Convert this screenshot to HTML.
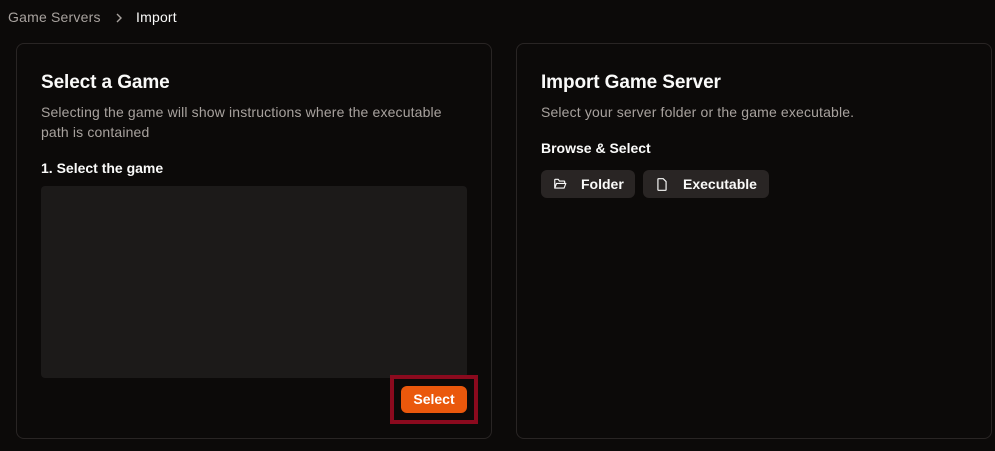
<!DOCTYPE html>
<html><head><style>
*{box-sizing:border-box;margin:0;padding:0}
body{width:995px;height:451px;background:#0c0a09;font-family:"Liberation Sans",sans-serif;color:#fafaf9;position:relative;overflow:hidden}
.abs{position:absolute}
.card{position:absolute;top:43px;width:476px;height:396px;border:1px solid #292524;border-radius:8px}
h2{position:absolute;font-size:19px;font-weight:bold;color:#fafaf9;letter-spacing:-0.1px}
.d{position:absolute;font-size:14px;color:#a8a29e;line-height:20px;letter-spacing:0.15px}
.l{position:absolute;font-size:14px;font-weight:bold}
.btn{position:absolute;top:170px;height:28px;background:#292524;border-radius:6px;font-size:14px;font-weight:bold;display:flex;align-items:center}
</style></head><body>
<div class="abs" style="left:8px;top:9px;font-size:14px;color:#a8a29e;letter-spacing:0.2px">Game Servers</div>
<svg class="abs" style="left:114px;top:12px" width="10" height="12" viewBox="0 0 10 12" fill="none" stroke="#a8a29e" stroke-width="1.4"><path d="M3 2l4 4-4 4"/></svg>
<div class="abs" style="left:136px;top:9px;font-size:14px;color:#fafaf9;letter-spacing:0.2px">Import</div>

<div class="card" style="left:16px"></div>
<h2 style="left:41px;top:72px">Select a Game</h2>
<div class="d" style="left:41px;top:102px;width:425px">Selecting the game will show instructions where the executable path is contained</div>
<div class="l" style="left:41px;top:160px">1. Select the game</div>
<div class="abs" style="left:41px;top:186px;width:426px;height:192px;background:#1c1a19;border-radius:4px"></div>
<div class="abs" style="left:390px;top:375px;width:88px;height:49px;border:4px solid #8b0a1e"></div>
<div class="abs" style="left:401px;top:386px;width:66px;height:27px;background:#ea580c;border-radius:6px;font-size:14px;font-weight:bold;color:#fff;text-align:center;line-height:27px">Select</div>

<div class="card" style="left:516px"></div>
<h2 style="left:541px;top:72px">Import Game Server</h2>
<div class="d" style="left:541px;top:102px">Select your server folder or the game executable.</div>
<div class="l" style="left:541px;top:140px">Browse &amp; Select</div>
<div class="btn" style="left:541px;width:94px">
<svg style="margin-left:12px" width="14" height="14" viewBox="0 0 24 24" fill="none" stroke="#fafaf9" stroke-width="2" stroke-linejoin="round"><path d="M3 19V5a1 1 0 0 1 1-1h5l2 3h8a1 1 0 0 1 1 1v2M3 19l3-8h16l-3 8z"/></svg>
<span style="margin-left:14px">Folder</span></div>
<div class="btn" style="left:643px;width:126px">
<svg style="margin-left:12px" width="14" height="15" viewBox="0 0 24 24" fill="none" stroke="#fafaf9" stroke-width="2" stroke-linejoin="round"><path d="M6 2h8l5 5v14a1 1 0 0 1-1 1H6a1 1 0 0 1-1-1V3a1 1 0 0 1 1-1z"/></svg>
<span style="margin-left:14px">Executable</span></div>
</body></html>
